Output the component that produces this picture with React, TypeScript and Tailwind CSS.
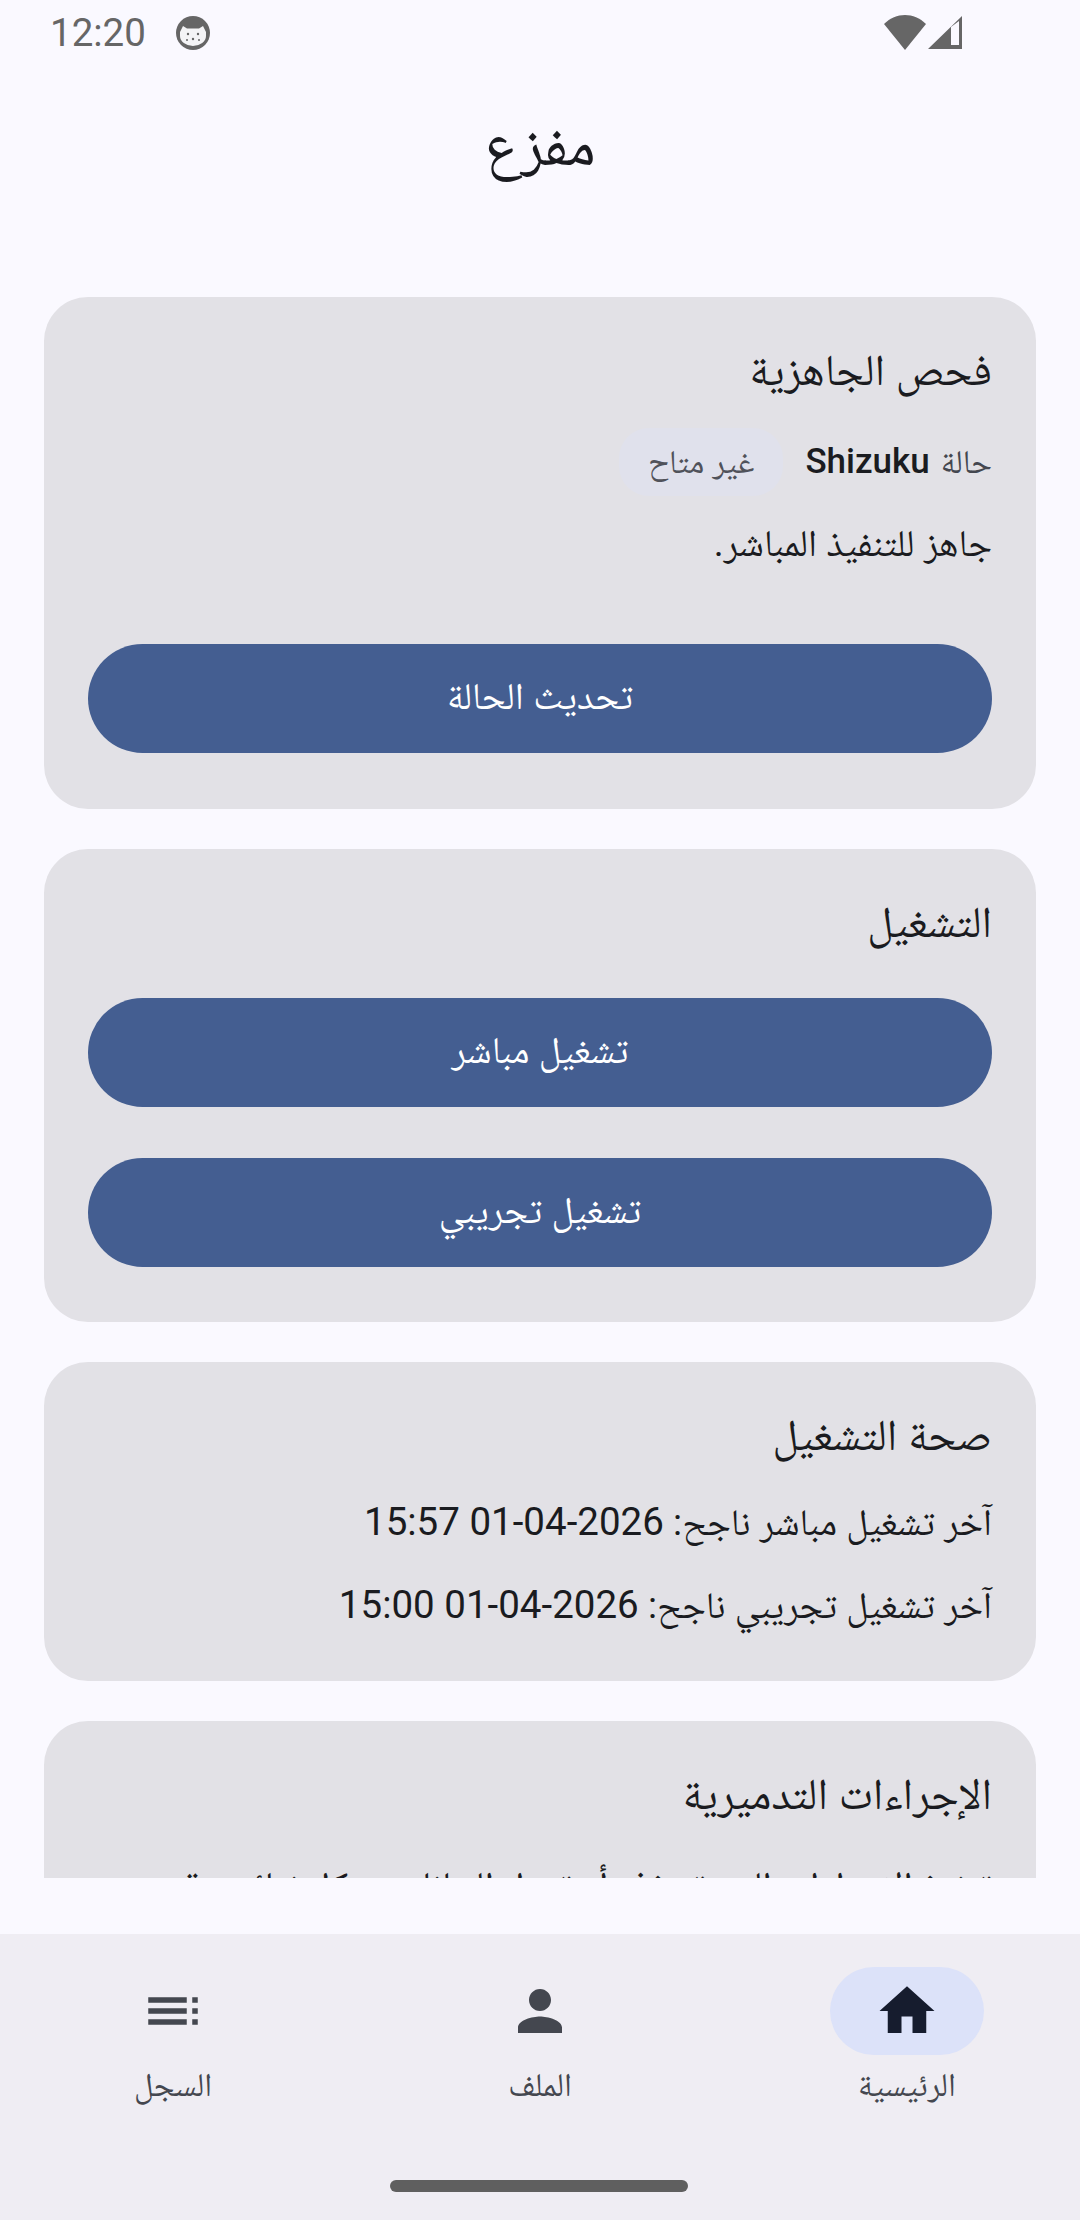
import React from "react";

const font = { fontFamily: 'Roboto, "Noto Naskh Arabic", "Noto Sans Arabic", "DejaVu Sans", sans-serif' };

function Card({ title, children, cls }: { title: string; children: React.ReactNode; cls: string }) {
  return (
    <section className={"shrink-0 rounded-[44px] bg-[#e2e1e6] px-[44px] pt-[43px] " + cls}>
      <h2 className="h-[60px] text-[44px] leading-[60px] font-normal text-[#1a1b20]">{title}</h2>
      {children}
    </section>
  );
}

function Btn({ children, cls }: { children: React.ReactNode; cls: string }) {
  return (
    <div className={"flex h-[109px] items-center justify-center rounded-full bg-[#445e91] pb-[4px] text-[37.8px] text-white " + cls}>
      {children}
    </div>
  );
}

function NavItem({ label, active, children }: { label: string; active?: boolean; children: React.ReactNode }) {
  return (
    <div className="flex w-[367px] shrink-0 flex-col items-center">
      <div className={"flex h-[88px] w-[154px] items-center justify-center rounded-full " + (active ? "bg-[#dce2f9]" : "")}>
        {children}
      </div>
      <div className="mt-[8px] h-[44px] text-[33px] leading-[44px] text-[#44474f]">{label}</div>
    </div>
  );
}

export default function App() {
  return (
    <div dir="rtl" style={font} className="flex h-[2220px] w-[1080px] flex-col overflow-hidden bg-[#faf9ff]">
      <div dir="ltr" className="relative flex h-[66px] shrink-0 items-center">
        <span className="ml-[50px] text-[38.5px] leading-[66px] text-[#666666]">12:20</span>
        <svg className="ml-[29px]" width="36" height="36" viewBox="0 0 36 36">
          <circle cx="18" cy="18" r="17" fill="#666666" />
          <path d="M5 17l3-6 4 2.5h12l4-2.5 3 6v4a13 10 0 0 1-26 0z" fill="#f4f4f6" />
          <circle cx="13" cy="19" r="1.2" fill="#666666" />
          <circle cx="23" cy="19" r="1.2" fill="#666666" />
          <circle cx="18" cy="24" r="1.2" fill="#666666" />
          <circle cx="12" cy="25" r="1" fill="#666666" />
          <circle cx="24" cy="25" r="1" fill="#666666" />
        </svg>
        <svg className="absolute left-[883px] top-[14px]" width="44" height="37" viewBox="0 0 44 37">
          <path d="M1 10C13 -2 31 -2 43 10L22 36z" fill="#666666" />
        </svg>
        <svg className="absolute left-[927px] top-[15px]" width="36" height="35" viewBox="0 0 36 35">
          <path fillRule="evenodd" d="M35 1V34H1zM24 12L24 30H32V6z" fill="#666666" />
        </svg>
      </div>

      <div className="flex h-[231px] shrink-0 items-start justify-center pt-[44px] text-[60px] leading-[70px] text-[#1a1b20]">مفزع</div>

      <main className="flex min-h-0 flex-1 flex-col gap-[40px] overflow-hidden px-[44px]">
        <Card title="فحص الجاهزية" cls="h-[512px]">
          <div className="mt-[29px] flex h-[66px] items-center">
            <span className="text-[33px] text-[#44474f]">حالة</span>
            <span className="mr-[11px] text-[35px] font-medium text-[#1a1b20]">Shizuku</span>
            <span className="mr-[22px] flex h-[68px] items-center rounded-[30px] bg-[#e0e1ec] px-[29px] text-[33px] text-[#50525a]">غير متاح</span>
          </div>
          <p className="mt-[20px] h-[56px] text-[37.8px] leading-[56px] text-[#1a1b20]">جاهز للتنفيذ المباشر.</p>
          <Btn cls="mt-[73px]">تحديث الحالة</Btn>
        </Card>

        <Card title="التشغيل" cls="h-[473px]">
          <Btn cls="mt-[46px]">تشغيل مباشر</Btn>
          <Btn cls="mt-[51px]">تشغيل تجريبي</Btn>
        </Card>

        <Card title="صحة التشغيل" cls="h-[319px]">
          <p className="mt-[29px] h-[56px] text-[37.4px] leading-[56px] text-[#1a1b20]">آخر تشغيل مباشر ناجح: <span className="text-[38.5px]">2026-04-01 15:57</span></p>
          <p className="mt-[27px] h-[56px] text-[37.4px] leading-[56px] text-[#1a1b20]">آخر تشغيل تجريبي ناجح: <span className="text-[38.5px]">2026-04-01 15:00</span></p>
        </Card>

        <Card title="الإجراءات التدميرية" cls="h-[400px]">
          <p className="mt-[33px] text-[37.8px] leading-[56px] text-[#1a1b20]">تنفيذ الإجراءات التي تحذف أو تعدل البيانات بشكل نهائي وقد يتعذر التراجع عنها.</p>
        </Card>
      </main>

      <div className="h-[56px] shrink-0" />

      <nav className="relative flex h-[286px] shrink-0 justify-center bg-[#efedf3] pt-[33px]">
        <NavItem label="الرئيسية" active>
          <svg width="66" height="66" viewBox="0 0 24 24" fill="#161c2e"><path d="M10 20v-6h4v6h5v-8h3L12 3 2 12h3v8z" /></svg>
        </NavItem>
        <NavItem label="الملف">
          <svg width="66" height="66" viewBox="0 0 24 24" fill="#44474f"><path d="M12 12c2.21 0 4-1.79 4-4s-1.79-4-4-4-4 1.79-4 4 1.79 4 4 4zm0 2c-2.67 0-8 1.34-8 4v2h16v-2c0-2.66-5.33-4-8-4z" /></svg>
        </NavItem>
        <NavItem label="السجل">
          <svg width="66" height="66" viewBox="0 0 24 24" fill="#44474f" className="-scale-x-100"><path d="M3 13h2v-2H3v2zm0 4h2v-2H3v2zm0-8h2V7H3v2zm4 4h14v-2H7v2zm0 4h14v-2H7v2zM7 7v2h14V7H7z" /></svg>
        </NavItem>
        <div className="absolute left-[390px] top-[246px] h-[12px] w-[298px] rounded-full bg-[#5f5f5f]" />
      </nav>
    </div>
  );
}
